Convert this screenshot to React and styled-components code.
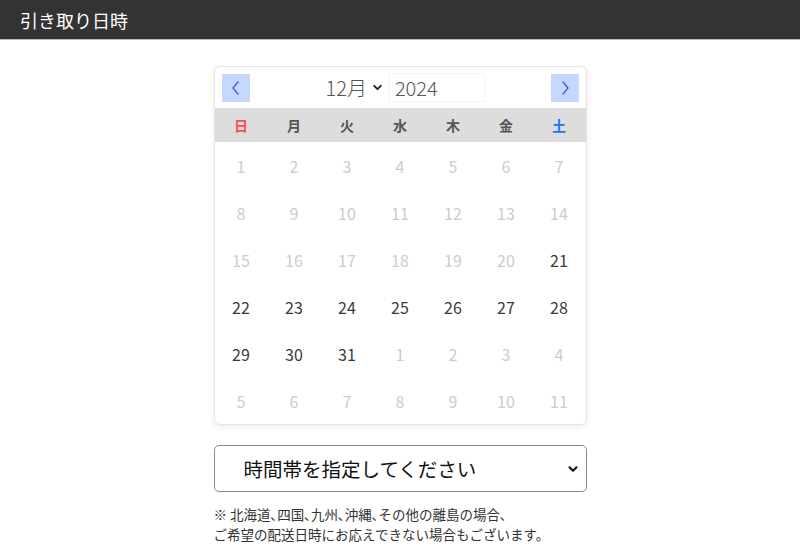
import React from 'react';
import styled, { createGlobalStyle } from 'styled-components';

const GlobalStyle = createGlobalStyle`
  body {
    margin: 0;
    background: #ffffff;
    font-family: "Noto Sans CJK JP", "Noto Sans", sans-serif;
    color: #333333;
  }
`;

const TitleBar = styled.header`
  height: 39px;
  background: #333333;
  border-bottom: 1px solid #b5b5b5;
  display: flex;
  align-items: center;
  padding-left: 20px;
  color: #ffffff;
  font-size: 18px;
  font-weight: 400;
`;

const Main = styled.main`
  width: 374px;
  margin: 26px auto 0;
  padding-left: 1px;
`;

const Calendar = styled.div`
  width: 371px;
  border: 1px solid #e6e6e6;
  border-radius: 6px;
  box-shadow: 0 2px 6px rgba(0, 0, 0, 0.08);
  overflow: hidden;
  background: #fff;
`;

const NavRow = styled.div`
  height: 41px;
  display: flex;
  align-items: center;
  padding: 0 7px;
  box-sizing: border-box;
`;

const NavButton = styled.button`
  width: 28px;
  height: 28px;
  border: none;
  padding: 0;
  background: #c3d9ff;
  color: #4156ee;
  display: flex;
  align-items: center;
  justify-content: center;
  margin-left: ${(p) => (p.$end ? 'auto' : '0')};
`;

const MonthYear = styled.div`
  display: flex;
  align-items: center;
  gap: 5px;
  font-size: 20px;
  font-weight: 300;
  color: #555;
  margin-left: 76px;
`;

const MonthLabel = styled.span`
  display: flex;
  align-items: center;
  gap: 4px;

  svg {
    color: #222;
  }
`;

const YearBox = styled.span`
  width: 96px;
  height: 29px;
  border: 1px solid #f3f3f3;
  box-sizing: border-box;
  padding-left: 5px;
  display: flex;
  align-items: center;
`;

const Grid = styled.div`
  display: grid;
  grid-template-columns: repeat(7, 53px);
`;

const WeekRow = styled(Grid)`
  height: 34px;
  background: #dddddd;
  align-items: center;
`;

const WeekDay = styled.div`
  text-align: center;
  font-size: 14px;
  font-weight: 700;
  color: ${(p) => p.$color || '#555'};
`;

const Day = styled.div`
  height: 47px;
  display: flex;
  align-items: center;
  justify-content: center;
  font-size: 16px;
  color: ${(p) => (p.$off ? '#cccccc' : '#3a3a3a')};
`;

const SelectBox = styled.div`
  margin-top: 20px;
  width: 373px;
  height: 47px;
  box-sizing: border-box;
  border: 1px solid #8a8a8a;
  border-radius: 5px;
  display: flex;
  align-items: center;
  justify-content: space-between;
  padding: 0 6px 0 29px;
  font-size: 19.5px;
  color: #111;
`;

const Note = styled.div`
  margin-top: 13px;
  font-size: 13.5px;
  color: #333;
`;

const NoteLine = styled.div`
  line-height: 19.5px;
  white-space: nowrap;
`;

const Chevron = ({ dir, size = 16, sw = 1.6 }) => (
  <svg width={size} height={size} viewBox="0 0 16 16" fill="none" stroke="currentColor" strokeWidth={sw} strokeLinecap="round" strokeLinejoin="round">
    {dir === 'left' && <path d="M10 2 5 8l5 6" />}
    {dir === 'right' && <path d="M6 2l5 6-5 6" />}
    {dir === 'down' && <path d="M4 6l4 4 4-4" />}
  </svg>
);

const weekdays = [
  { l: '日', c: '#ff4d4d' },
  { l: '月' },
  { l: '火' },
  { l: '水' },
  { l: '木' },
  { l: '金' },
  { l: '土', c: '#1a73ff' },
];

const days = [];
for (let i = 1; i <= 31; i++) days.push({ n: i, off: i < 21 });
for (let i = 1; i <= 11; i++) days.push({ n: i, off: true });

export default function App() {
  return (
    <>
      <GlobalStyle />
      <TitleBar>引き取り日時</TitleBar>
      <Main>
        <Calendar>
          <NavRow>
            <NavButton><Chevron dir="left" sw={1.3} /></NavButton>
            <MonthYear>
              <MonthLabel>12月<Chevron dir="down" size={13} sw={2.4} /></MonthLabel>
              <YearBox>2024</YearBox>
            </MonthYear>
            <NavButton $end><Chevron dir="right" sw={1.3} /></NavButton>
          </NavRow>
          <WeekRow>
            {weekdays.map((w) => (
              <WeekDay key={w.l} $color={w.c}>{w.l}</WeekDay>
            ))}
          </WeekRow>
          <Grid>
            {days.map((d, i) => (
              <Day key={i} $off={d.off}>{d.n}</Day>
            ))}
          </Grid>
        </Calendar>
        <SelectBox>
          時間帯を指定してください
          <Chevron dir="down" size={14} sw={2.4} />
        </SelectBox>
        <Note>
          <NoteLine>※ 北海道､四国､九州､沖縄､その他の離島の場合､</NoteLine>
          <NoteLine>ご希望の配送日時にお応えできない場合もございます。</NoteLine>
        </Note>
      </Main>
    </>
  );
}
